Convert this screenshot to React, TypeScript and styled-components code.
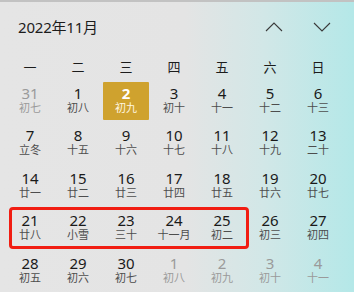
import React from "react";
import styled, { createGlobalStyle } from "styled-components";

const GlobalStyle = createGlobalStyle`
  html, body {
    margin: 0;
    padding: 0;
    width: 354px;
    height: 292px;
    overflow: hidden;
  }
  body {
    font-family: "Noto Sans", "Noto Sans CJK SC", sans-serif;
  }
`;

const Panel = styled.div`
  width: 354px;
  height: 292px;
  box-sizing: border-box;
  border-top: 2px solid #c2c2c2;
  background: linear-gradient(90deg, #e5e5e5 0%, #e4e4e4 52%, #d2e7e7 74%, #b4e8e8 100%);
  color: #1a1a1a;
  display: flex;
  flex-direction: column;
`;

const Header = styled.div`
  height: 51px;
  display: flex;
  align-items: center;
  justify-content: space-between;
  padding: 2px 18px 0 18px;
  box-sizing: border-box;
`;

const Title = styled.div`
  font-size: 15px;
  font-family: "Noto Sans", "Noto Sans CJK SC", sans-serif;
  color: #1c1c1c;
  letter-spacing: -0.2px;
`;

const Nav = styled.div`
  display: flex;
  gap: 24px;
  margin-right: 2px;
`;

const NavButton = styled.div`
  width: 24px;
  height: 24px;
  display: flex;
  align-items: center;
  justify-content: center;
`;

const Weekdays = styled.div`
  display: grid;
  grid-template-columns: repeat(7, 48px);
  margin-left: 6px;
  height: 32px;
  padding-top: 3px;
  box-sizing: border-box;
  align-items: center;
`;

const Weekday = styled.div`
  text-align: center;
  font-size: 13px;
  font-family: "Noto Sans CJK SC", sans-serif;
  color: #1c1c1c;
`;

const Grid = styled.div`
  position: relative;
  display: grid;
  grid-template-columns: repeat(7, 48px);
  grid-auto-rows: 42.5px;
  margin-left: 6px;
`;

const Cell = styled.div<{ $muted?: boolean; $today?: boolean }>`
  margin: 2px 1px 2px 1px;
  padding-bottom: 4px;
  box-sizing: border-box;
  border-radius: 1px;
  display: flex;
  flex-direction: column;
  align-items: center;
  justify-content: center;
  background: ${(p) => (p.$today ? "#cfa22e" : "transparent")};
  color: ${(p) => (p.$today ? "#ffffff" : p.$muted ? "#9a9a9a" : "#1a1a1a")};
`;

const Day = styled.div<{ $today?: boolean }>`
  font-size: 15px;
  line-height: 16px;
  font-weight: ${(p) => (p.$today ? 700 : 400)};
  font-family: "Noto Sans", sans-serif;
`;

const Lunar = styled.div<{ $muted?: boolean; $today?: boolean }>`
  font-size: 11px;
  line-height: 12px;
  font-family: "Noto Sans CJK SC", sans-serif;
  color: ${(p) => (p.$today ? "#fff6e0" : p.$muted ? "#9a9a9a" : "#4d4d4d")};
`;

const Marker = styled.div`
  position: absolute;
  left: 3px;
  top: 127.5px;
  width: 240px;
  height: 42px;
  box-sizing: border-box;
  border: 3px solid #f11d12;
  border-radius: 4px;
  pointer-events: none;
`;

const weekdays = ["一", "二", "三", "四", "五", "六", "日"];

type DayItem = { d: number; l: string; muted?: boolean; today?: boolean };

const days: DayItem[] = [
  { d: 31, l: "初七", muted: true },
  { d: 1, l: "初八" },
  { d: 2, l: "初九", today: true },
  { d: 3, l: "初十" },
  { d: 4, l: "十一" },
  { d: 5, l: "十二" },
  { d: 6, l: "十三" },
  { d: 7, l: "立冬" },
  { d: 8, l: "十五" },
  { d: 9, l: "十六" },
  { d: 10, l: "十七" },
  { d: 11, l: "十八" },
  { d: 12, l: "十九" },
  { d: 13, l: "二十" },
  { d: 14, l: "廿一" },
  { d: 15, l: "廿二" },
  { d: 16, l: "廿三" },
  { d: 17, l: "廿四" },
  { d: 18, l: "廿五" },
  { d: 19, l: "廿六" },
  { d: 20, l: "廿七" },
  { d: 21, l: "廿八" },
  { d: 22, l: "小雪" },
  { d: 23, l: "三十" },
  { d: 24, l: "十一月" },
  { d: 25, l: "初二" },
  { d: 26, l: "初三" },
  { d: 27, l: "初四" },
  { d: 28, l: "初五" },
  { d: 29, l: "初六" },
  { d: 30, l: "初七" },
  { d: 1, l: "初八", muted: true },
  { d: 2, l: "初九", muted: true },
  { d: 3, l: "初十", muted: true },
  { d: 4, l: "十一", muted: true },
];

const Chevron = ({ up }: { up?: boolean }) => (
  <svg width="18" height="10" viewBox="0 0 18 10" fill="none">
    <path
      d={up ? "M1 9 L9 1 L17 9" : "M1 1 L9 9 L17 1"}
      stroke="#3a3a3a"
      strokeWidth="1.1"
    />
  </svg>
);

export default function App() {
  return (
    <>
      <GlobalStyle />
      <Panel>
        <Header>
          <Title>2022年11月</Title>
          <Nav>
            <NavButton>
              <Chevron up />
            </NavButton>
            <NavButton>
              <Chevron />
            </NavButton>
          </Nav>
        </Header>
        <Weekdays>
          {weekdays.map((w) => (
            <Weekday key={w}>{w}</Weekday>
          ))}
        </Weekdays>
        <Grid>
          {days.map((x, i) => (
            <Cell key={i} $muted={x.muted} $today={x.today}>
              <Day $today={x.today}>{x.d}</Day>
              <Lunar $muted={x.muted} $today={x.today}>
                {x.l}
              </Lunar>
            </Cell>
          ))}
          <Marker />
        </Grid>
      </Panel>
    </>
  );
}
